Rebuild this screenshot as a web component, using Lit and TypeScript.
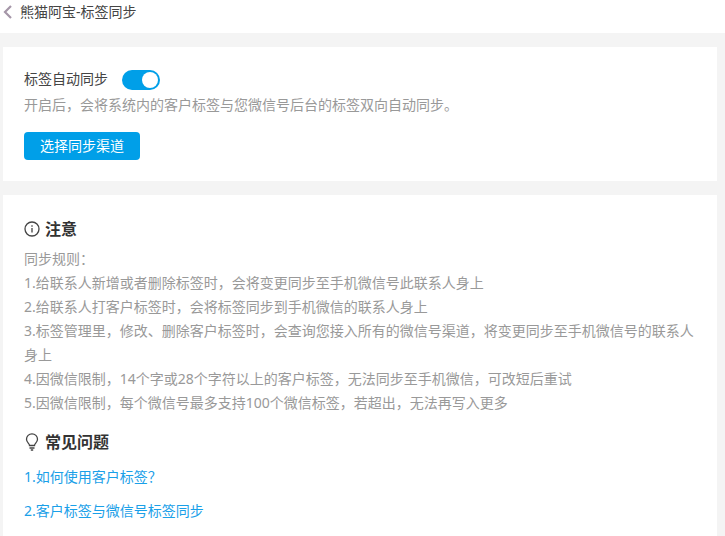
import { LitElement, html, css } from "lit";
import { customElement } from "lit/decorators.js";

@customElement("app-root")
export class AppRoot extends LitElement {
  static styles = css`
    :host {
      display: block;
      height: 536px;
      overflow: hidden;
      background: #f4f4f4;
      font-family: "Noto Sans", "Noto Sans CJK SC", sans-serif;
      font-size: 14px;
    }
    .header {
      height: 33px;
      background: #fff;
      display: flex;
      align-items: flex-start;
      padding: 0 0 0 3px;
      box-sizing: border-box;
      color: #444;
      gap: 7px;
    }
    .back { width: 10px; height: 14px; display: block; margin-top: 5px; flex: none; }
    .header span { line-height: 24px; }
    .main {
      display: flex;
      flex-direction: column;
      gap: 14px;
      padding: 14px 8px 0 3px;
    }
    .card { background: #fff; }
    .sync { height: 134px; box-sizing: border-box; padding: 22px 21px 0; }
    .row { display: flex; align-items: flex-start; gap: 14px; height: 22px; color: #444; line-height: 20px; }
    .toggle {
      width: 38px;
      height: 20px;
      margin-top: 1px;
      border-radius: 10px;
      background: #009fe8;
      display: flex;
      justify-content: flex-end;
      align-items: center;
      padding: 2px;
      box-sizing: border-box;
    }
    .knob { width: 16px; height: 16px; border-radius: 50%; background: #fff; }
    .hint { color: #999; line-height: 24px; margin-top: 2px; }
    .btn {
      margin-top: 15px;
      width: 116px;
      height: 28px;
      border-radius: 4px;
      background: #009fe8;
      color: #fff;
      display: flex;
      align-items: center;
      justify-content: center;
      line-height: 28px;
    }
    .notes { height: 345px; box-sizing: border-box; padding: 22px 21px 0; }
    .title {
      display: flex;
      align-items: center;
      gap: 5px;
      font-size: 16px;
      font-weight: 700;
      color: #333;
      height: 24px;
      line-height: 24px;
    }
    .title svg { display: block; flex: none; }
    .rules { margin-top: 6px; color: #999; line-height: 24px; }
    .faq { margin-top: 15px; }
    .link { display: block; color: #1aa0e8; line-height: 24px; margin-top: 10px; text-decoration: none; }
    .faq + .link { margin-top: 11px; }
  `;

  render() {
    return html`
      <div class="header">
        <svg class="back" viewBox="0 0 10 14" fill="none" stroke="#a596a8" stroke-width="2.2">
          <path d="M8 1 2 7l6 6" />
        </svg>
        <span>熊猫阿宝-标签同步</span>
      </div>
      <div class="main">
        <section class="card sync">
          <div class="row">
            <span>标签自动同步</span>
            <div class="toggle"><div class="knob"></div></div>
          </div>
          <div class="hint">开启后，会将系统内的客户标签与您微信号后台的标签双向自动同步。</div>
          <div class="btn">选择同步渠道</div>
        </section>
        <section class="card notes">
          <div class="title">
            <svg width="16" height="16" viewBox="0 0 16 16" fill="none" stroke="#444" stroke-width="1.3">
              <circle cx="8" cy="8" r="7" />
              <path d="M8 7v4.5M8 4.2v1.5" />
            </svg>
            <span>注意</span>
          </div>
          <div class="rules">
            同步规则：<br />
            1.给联系人新增或者删除标签时，会将变更同步至手机微信号此联系人身上<br />
            2.给联系人打客户标签时，会将标签同步到手机微信的联系人身上<br />
            3.标签管理里，修改、删除客户标签时，会查询您接入所有的微信号渠道，将变更同步至手机微信号的联系人身上<br />
            4.因微信限制，14个字或28个字符以上的客户标签，无法同步至手机微信，可改短后重试<br />
            5.因微信限制，每个微信号最多支持100个微信标签，若超出，无法再写入更多
          </div>
          <div class="title faq">
            <svg width="16" height="18" viewBox="0 0 16 18" fill="none" stroke="#444" stroke-width="1.3">
              <path d="M5.5 12.5c0-2-3-3-3-6.2a5.5 5.5 0 0 1 11 0c0 3.200-3 4.200-3 6.200z" />
              <path d="M5.500 15h5M6.800 17h2.400" />
            </svg>
            <span>常见问题</span>
          </div>
          <a class="link">1.如何使用客户标签？</a>
          <a class="link">2.客户标签与微信号标签同步</a>
        </section>
      </div>
    `;
  }
}
